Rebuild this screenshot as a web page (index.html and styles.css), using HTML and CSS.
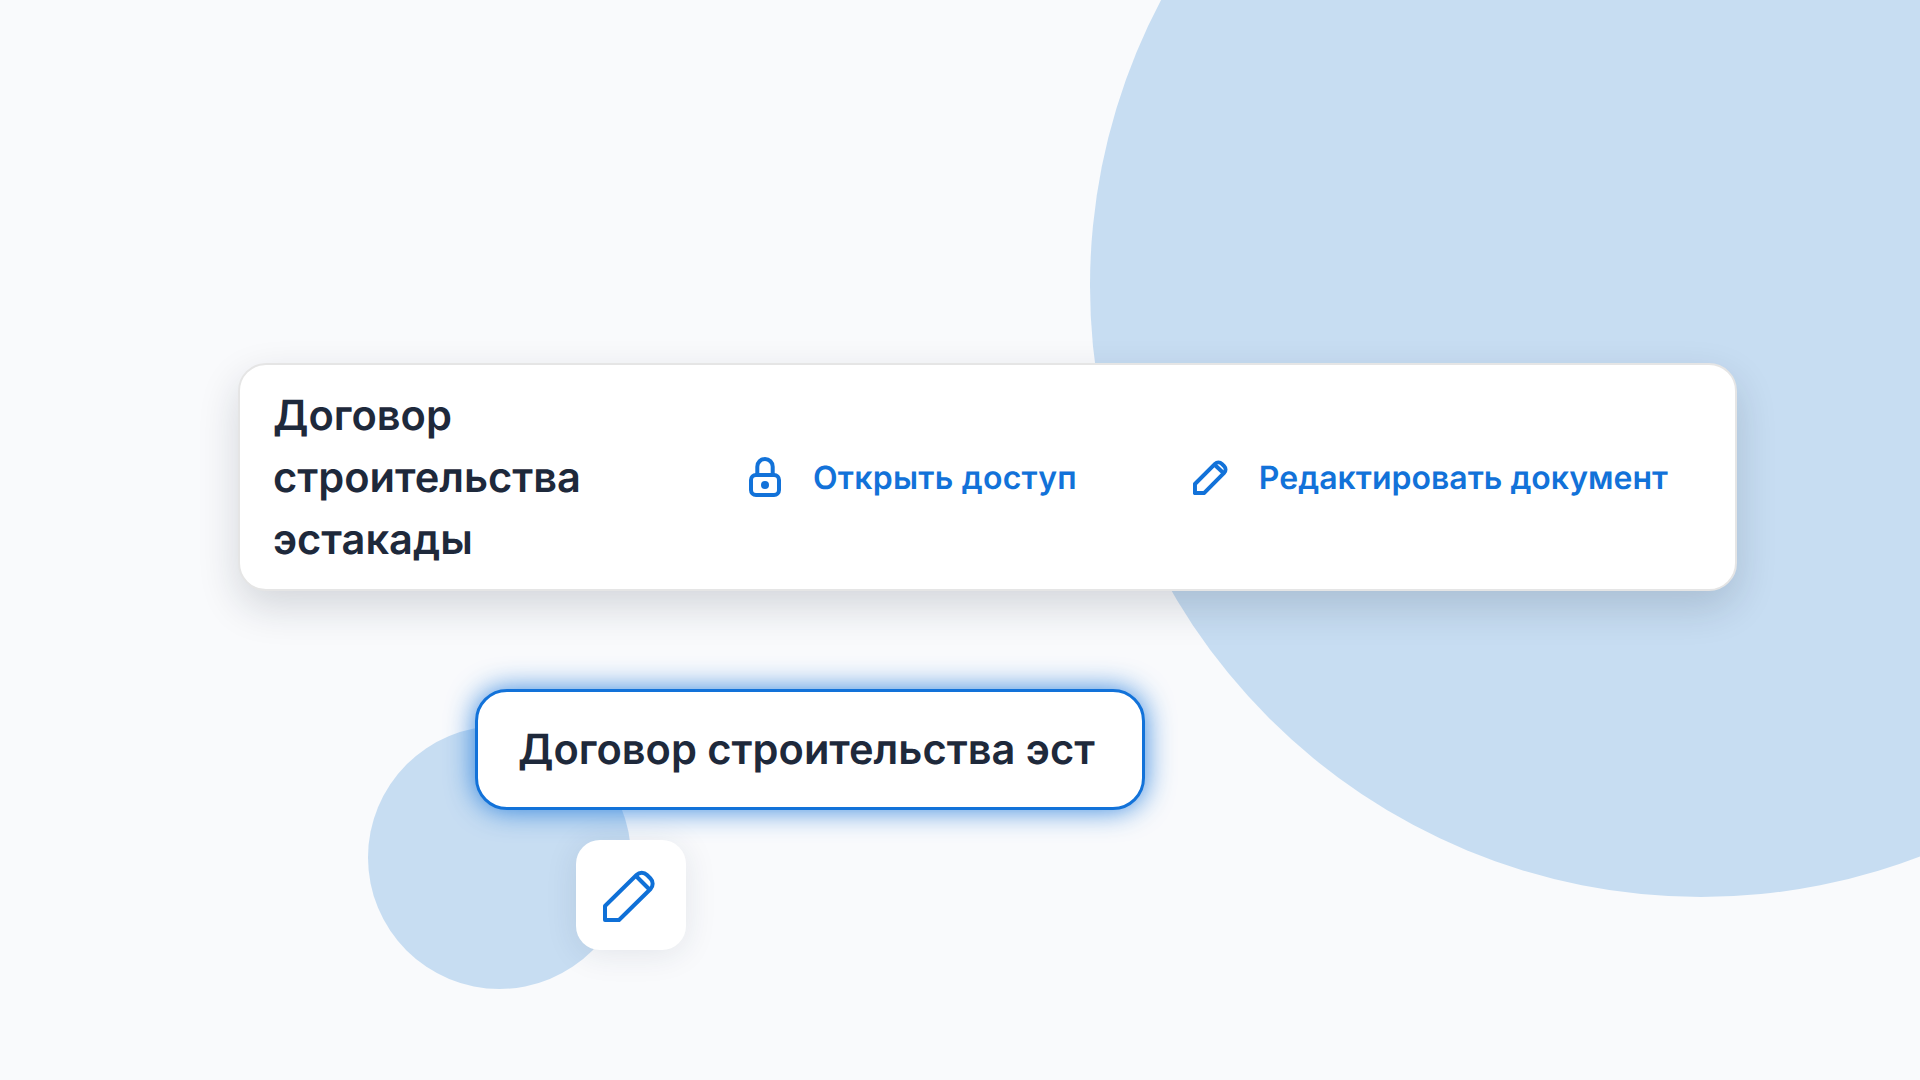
FILE: index.html
```html
<!DOCTYPE html>
<html lang="ru">
<head>
<meta charset="utf-8">
<title>Договор</title>
<link rel="stylesheet" href="styles.css">
</head>
<body>
<div class="canvas">
  <div class="circle circle-big"></div>
  <div class="circle circle-small"></div>
  <section class="card">
    <h1 class="card-title">Договор строительства эстакады</h1>
    <a class="action action-lock">
      <svg class="icon" viewBox="0 0 32 40" width="32" height="40" fill="none" stroke="#1272d9" stroke-width="4"><rect x="2" y="18" width="28" height="20" rx="5"/><path d="M8.300 18V9.700a7.700 7.700 0 0 1 15.400 0V18"/><circle cx="16" cy="28" r="4" fill="#1272d9" stroke="none"/></svg>
      <span class="lock-label">Открыть доступ</span>
    </a>
    <a class="action action-edit">
      <svg class="icon" viewBox="0 0 54 54" width="35" height="35" fill="none" stroke="#1272d9" stroke-width="6.200" stroke-linejoin="round"><path d="M3 51V37L34 6a7.500 7.500 0 0 1 10.500 0l3.500 3.500a7.500 7.500 0 0 1 0 10.500L17 51z"/><path d="M33 7l14 13"/></svg>
      <span>Редактировать документ</span>
    </a>
  </section>
  <div class="input">Договор строительства эст</div>
  <div class="tool">
    <svg class="tool-icon" viewBox="0 0 54 54" width="54" height="54" fill="none" stroke="#0f70d7" stroke-width="4" stroke-linejoin="round"><path d="M2 50V36L33.500 5a7.500 7.500 0 0 1 10.500 0l3.500 3.500a7.500 7.500 0 0 1 0 10.500L16 50z"/><path d="M33 6l13 13"/></svg>
  </div>
</div>
</body>
</html>
```
FILE: styles.css
```css
* { box-sizing: border-box; }
html, body { margin: 0; height: 100%; }
body { background: #f9fafc; font-family: Inter, "Noto Sans", sans-serif; overflow: hidden; text-rendering: geometricPrecision; }
.canvas { position: relative; width: 1920px; height: 1080px; padding: 363px 0 0 238px; overflow: hidden; }
.circle { position: absolute; border-radius: 50%; background: #c7ddf2; }
.circle-big { left: 1090px; top: -325px; width: 1222px; height: 1222px; }
.circle-small { left: 368px; top: 726px; width: 263px; height: 263px; }
.card { position: relative; display: flex; align-items: center; width: 1499px; height: 228px; padding: 0 33px; background: #fff; border: 2px solid #e5e5e5; border-radius: 28px; box-shadow: 0 16px 40px rgba(20, 30, 50, .16); }
.card-title { width: 476px; margin: 2px 0 0; font-size: 41.6px; line-height: 62px; font-weight: 600; color: #1e293b; }
.action { display: flex; align-items: center; gap: 32px; font-size: 32px; font-weight: 600; color: #1272d9; white-space: nowrap; }
.lock-label { letter-spacing: .25px; }
.action-edit { margin-left: 116px; gap: 31px; }
.icon { display: block; }
.input { position: relative; display: flex; align-items: center; width: 670px; height: 121px; margin: 98px 0 0 237px; padding: 0 40px; background: #fff; border: 3px solid #1272d9; border-radius: 32px; font-size: 41.6px; font-weight: 600; color: #1e293b; white-space: nowrap; box-shadow: 0 0 28px rgba(18, 114, 217, .85); }
.tool { position: relative; display: flex; align-items: center; justify-content: center; width: 110px; height: 110px; margin: 30px 0 0 338px; background: #fff; border-radius: 24px; box-shadow: 0 4px 32px rgba(30, 50, 80, .1); }
.tool-icon { margin: 4px 2px 0 0; }
```
